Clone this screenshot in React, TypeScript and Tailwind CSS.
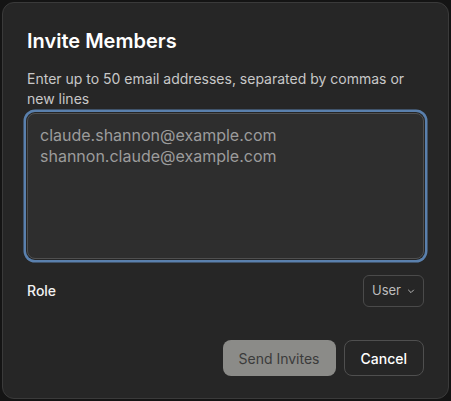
import { useState } from "react";

export default function App() {
    const [emails, setEmails] = useState("claude.shannon@example.com\nshannon.claude@example.com");

    return (
        <div className="h-[401px] w-[451px] bg-[#141414] p-[2px] font-['Inter',sans-serif]">
            <div className="flex h-full flex-col rounded-xl border border-[#3a3a3a] bg-[#262626] px-6 pt-6 pb-[22px]">
                <h2 className="text-[20px] leading-7 font-semibold text-white">Invite Members</h2>
                <p className="mt-3.5 text-[14px] leading-5 text-[#c8c8c8]">
                    Enter up to 50 email addresses, separated by commas or new lines
                </p>
                <textarea
                    value={emails}
                    onChange={(e) => setEmails(e.target.value)}
                    className="mt-1 h-[146px] w-full resize-none rounded-lg border border-[#4f4f4f] bg-[#2e2e2e] px-3 pt-[11px] text-[16px] leading-[21px] text-[#9c9c9c] outline-none ring-[2.5px] ring-[#5a80ad] ring-offset-1 ring-offset-[#262626]"
                />
                <div className="mt-4 flex items-center justify-between">
                    <span className="-mt-0.5 text-[14px] font-medium text-[#f2f2f2]">Role</span>
                    <button className="flex h-8 items-center gap-1.5 rounded-md border border-[#4a4a4a] pr-2 pl-2 text-[13px] text-[#bdbdbd]">
                        User
                        <svg width="8" height="8" viewBox="0 0 10 10" fill="none" stroke="currentColor" strokeWidth="1.2">
                            <path d="M1.5 3.5 5 7 8.5 3.5" />
                        </svg>
                    </button>
                </div>
                <div className="mt-auto flex justify-end gap-2">
                    <button disabled className="h-9 rounded-lg bg-[#8b8b88] px-4 text-[14px] text-[#3b3b3b]">Send Invites</button>
                    <button className="h-9 rounded-lg border border-[#4f4f4f] px-4 text-[14px] font-medium text-white">Cancel</button>
                </div>
            </div>
        </div>
    );
}
